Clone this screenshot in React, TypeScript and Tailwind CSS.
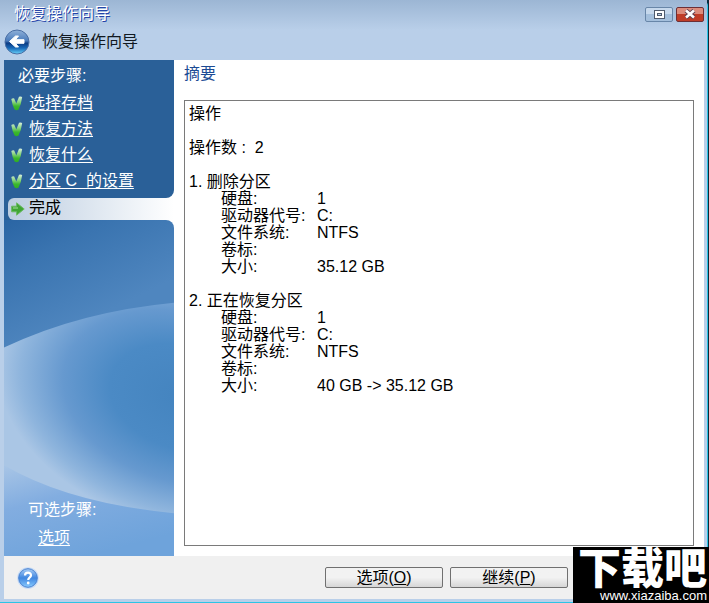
import React from 'react';

const finishedSteps = ['选择存档', '恢复方法', '恢复什么', '分区 C  的设置'];

const operations = [
  {
    title: '1. 删除分区',
    rows: [
      ['硬盘:', '1'],
      ['驱动器代号:', 'C:'],
      ['文件系统:', 'NTFS'],
      ['卷标:', ''],
      ['大小:', '35.12 GB'],
    ],
  },
  {
    title: '2. 正在恢复分区',
    rows: [
      ['硬盘:', '1'],
      ['驱动器代号:', 'C:'],
      ['文件系统:', 'NTFS'],
      ['卷标:', ''],
      ['大小:', '40 GB -> 35.12 GB'],
    ],
  },
];

const BackIcon = () => (
  <svg width="26" height="26" viewBox="0 0 26 26" aria-hidden="true">
    <defs>
      <linearGradient id="back" x1="0" y1="0" x2="0" y2="1">
        <stop offset="0" stopColor="#8fb0d8" />
        <stop offset="0.45" stopColor="#4a7cbc" />
        <stop offset="0.55" stopColor="#0c3c84" />
        <stop offset="0.75" stopColor="#1668b8" />
        <stop offset="1" stopColor="#6cd4fa" />
      </linearGradient>
    </defs>
    <circle cx="13" cy="13" r="12" fill="url(#back)" stroke="#4a6ea4" />
    <path d="M5.5 12.5 L11.5 7 H14.5 L11.5 10.7 H20 V14.3 H11.5 L14.5 18 H11.5 Z" fill="#fff" stroke="#fff" strokeLinejoin="round" />
  </svg>
);

const CheckIcon = () => (
  <svg width="12" height="15" viewBox="0 0 12 15" className="shrink-0" aria-hidden="true">
    <defs>
      <linearGradient id="tick" x1="0" y1="0" x2="0" y2="1">
        <stop offset="0" stopColor="#d9efe0" />
        <stop offset="0.4" stopColor="#8cd482" />
        <stop offset="0.7" stopColor="#3cb82c" />
        <stop offset="1" stopColor="#2fae22" />
      </linearGradient>
    </defs>
    <path d="M0.3 3 Q2 1.8 3.2 2.6 L5.3 7.6 L8 0.8 Q9.6 0 11.2 1 Q10.4 8 7.4 13.8 Q5.4 14.8 3.6 13.4 Q1.2 9 0.3 3 Z" fill="url(#tick)" />
  </svg>
);

const CurrentIcon = () => (
  <svg width="14" height="14" viewBox="0 0 14 14" className="shrink-0" aria-hidden="true">
    <path d="M0.6 4.2 H5.6 V0.8 L13.2 7 L5.6 13.2 V9.8 H0.6 Z" fill="#3fa634" stroke="#6cba64" strokeLinejoin="round" />
    <path d="M2 6 H7" fill="none" stroke="#a6de9c" />
  </svg>
);

const HelpIcon = () => (
  <svg width="22" height="22" viewBox="0 0 22 22" aria-hidden="true">
    <defs>
      <linearGradient id="help" x1="0" y1="0" x2="0" y2="1">
        <stop offset="0" stopColor="#a9cdf6" />
        <stop offset="0.5" stopColor="#3f86e0" />
        <stop offset="1" stopColor="#8accff" />
      </linearGradient>
    </defs>
    <circle cx="11" cy="11" r="10.8" fill="#c8dcf6" />
    <circle cx="11" cy="11" r="9.3" fill="url(#help)" stroke="#4a82d0" />
    <path d="M8 8.6 C8 4.6 14.2 4.8 14 8.4 C13.9 10.4 11.2 10.4 11.2 13" fill="none" stroke="#fff" strokeWidth="2.2" />
    <circle cx="11.2" cy="16" r="1.4" fill="#fff" />
  </svg>
);

const SidebarWaves = () => (
  <svg className="absolute inset-0 h-full w-full" viewBox="0 0 170 337" preserveAspectRatio="none" aria-hidden="true">
    <defs>
      <linearGradient id="sky" x1="0" y1="0" x2="0.25" y2="1">
        <stop offset="0" stopColor="#2a65a4" />
        <stop offset="0.15" stopColor="#3a74b0" />
        <stop offset="0.4" stopColor="#4f86bf" />
      </linearGradient>
      <radialGradient id="swell" gradientUnits="userSpaceOnUse" cx="0" cy="0" r="1" gradientTransform="translate(180 178) rotate(16) scale(190 130)">
        <stop offset="0" stopColor="#4484bf" />
        <stop offset="0.4" stopColor="#4b8ac5" />
        <stop offset="0.65" stopColor="#6699cf" />
        <stop offset="0.88" stopColor="#8fb5dd" />
        <stop offset="1" stopColor="#aac6e5" />
      </radialGradient>
      <linearGradient id="shore" x1="0" y1="0" x2="0.5" y2="1">
        <stop offset="0" stopColor="#a8c5e6" />
        <stop offset="0.4" stopColor="#82ade0" />
        <stop offset="1" stopColor="#6ea3db" />
      </linearGradient>
    </defs>
    <rect width="170" height="337" fill="url(#sky)" />
    <path d="M0 128 Q75 92 170 83 V337 H0 Z" fill="url(#swell)" />
    <path d="M0 246 Q65 284 170 294 V337 H0 Z" fill="url(#shore)" />
  </svg>
);

const TitleBar = () => (
  <header className="h-[60px] bg-linear-to-b from-[#9cb6d4] via-[#b9cfe9] via-50% to-[#b9cfe9] pr-[3px] pl-1">
    <div className="flex h-7 items-center justify-between">
      <h1 className="pl-2.5 text-[16px] leading-7 text-white [text-shadow:1px_1px_0_#2343a8]">恢复操作向导</h1>
      <div className="flex gap-[3px]">
        <button
          type="button"
          aria-label="最大化"
          className="flex h-[15px] w-7 items-center justify-center rounded-xs border border-[#6886a8] bg-linear-to-b from-[#c6d8ec] from-50% to-[#a4bfdc] to-50%"
        >
          <svg width="11" height="9" viewBox="0 0 11 9">
            <rect x="0.5" y="0.5" width="10" height="8" fill="#fff" stroke="#4f5a6c" />
            <rect x="3.5" y="3.5" width="4" height="2" fill="#b8cde4" stroke="#4f5a6c" />
          </svg>
        </button>
        <button
          type="button"
          aria-label="关闭"
          className="flex h-[15px] w-7 items-center justify-center rounded-xs border border-[#6d2f35] bg-linear-to-b from-[#dc8c7c] from-50% to-[#bf3d28] to-50%"
        >
          <svg width="12" height="10" viewBox="0 0 12 10">
            <path d="M2 1.5 L10 8.5 M10 1.5 L2 8.5" stroke="#5d4050" strokeWidth="4.4" />
            <path d="M2 1.5 L10 8.5 M10 1.5 L2 8.5" stroke="#fff" strokeWidth="2.6" />
          </svg>
        </button>
      </div>
    </div>
    <div className="flex h-8 items-center gap-3">
      <button type="button" aria-label="返回" className="-mt-1">
        <BackIcon />
      </button>
      <span className="-mt-1 text-[16px] leading-6 text-[#101820]">恢复操作向导</span>
    </div>
  </header>
);

const Sidebar = () => (
  <aside className="flex w-[170px] shrink-0 flex-col text-[16px] text-white">
    <div className="rounded-br-lg bg-[#2a6098] pt-1 pb-1">
      <h2 className="pl-3.5 leading-6">必要步骤:</h2>
      <ul className="pt-0.5">
        {finishedSteps.map((step) => (
          <li key={step} className="flex h-[26px] items-center gap-1.5 pl-[7px]">
            <CheckIcon />
            <a href="#" className="whitespace-pre underline underline-offset-2">
              {step}
            </a>
          </li>
        ))}
      </ul>
    </div>
    <div className="bg-[#2a6098] pl-1">
      <div className="flex h-[22px] items-start gap-1 rounded-l-md bg-linear-to-r from-[#bccde0] to-white pl-[3px] text-black">
        <span className="pt-1">
          <CurrentIcon />
        </span>
        <span className="leading-5">完成</span>
      </div>
    </div>
    <div className="relative flex flex-1 flex-col justify-end overflow-hidden rounded-tr-lg">
      <SidebarWaves />
      <div className="relative pb-1 pl-6">
        <h2 className="leading-7">可选步骤:</h2>
        <a href="#" className="ml-2.5 leading-7 underline underline-offset-2">
          选项
        </a>
      </div>
    </div>
  </aside>
);

const Summary = () => (
  <main className="flex flex-1 flex-col bg-white pt-1 pr-2.5 pb-2.5 pl-2.5">
    <h2 className="text-[16px] leading-5 text-[#1c4b94]">摘要</h2>
    <section className="mt-4 flex-1 border border-[#7a7a7a] pt-1 pl-1 text-[16px] leading-[17px] text-black">
      <p>操作</p>
      <p className="mt-[17px]">操作数 :&nbsp; 2</p>
      {operations.map((operation) => (
        <div key={operation.title} className="mt-[17px]">
          <h3>{operation.title}</h3>
          <dl className="grid grid-cols-[96px_1fr] pl-8">
            {operation.rows.map(([label, value]) => (
              <React.Fragment key={label}>
                <dt>{label}</dt>
                <dd>{value}</dd>
              </React.Fragment>
            ))}
          </dl>
        </div>
      ))}
    </section>
  </main>
);

const Footer = () => (
  <footer className="flex h-[43px] items-center justify-between bg-[#f0f0f0] pr-[136px] pl-[13px]">
    <button type="button" aria-label="帮助">
      <HelpIcon />
    </button>
    <div className="flex gap-[7px]">
      {[
        ['选项', 'O'],
        ['继续', 'P'],
      ].map(([label, key]) => (
        <button
          key={key}
          type="button"
          className="flex h-[21px] w-[118px] items-center justify-center rounded-xs border border-[#707070] bg-linear-to-b from-[#f2f2f2] from-50% to-[#d6d6d6] text-[16px] leading-5 text-black"
        >
          {label}(<span className="underline">{key}</span>)
        </button>
      ))}
    </div>
  </footer>
);

const Watermark = () => (
  <div className="absolute right-0 bottom-0 w-[136px] bg-black pt-0.5 pr-0.5 text-right text-white">
    <div className="text-[43px] leading-[40px] font-black">下载吧</div>
    <div className="text-[13px] leading-[14px]">www.xiazaiba.com</div>
  </div>
);

export default function App() {
  return (
    <div className="relative min-h-screen bg-[#0b2a3a] pr-px font-['Liberation_Sans','Noto_Sans_CJK_SC',sans-serif]">
      <div className="flex min-h-screen flex-col rounded-tr-md border-r border-b border-[#2cc4e6] bg-[#b9cfe9]">
        <TitleBar />
        <div className="flex flex-1 flex-col pr-[3px] pb-[3px] pl-1">
          <div className="flex flex-1 bg-white">
            <Sidebar />
            <Summary />
          </div>
          <Footer />
        </div>
      </div>
      <Watermark />
    </div>
  );
}
